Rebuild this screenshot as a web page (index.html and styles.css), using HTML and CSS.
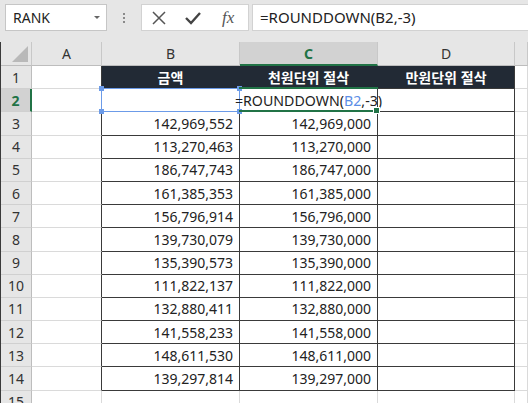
FILE: index.html
```html
<!DOCTYPE html>
<html lang="ko">
<head>
    <meta charset="UTF-8">
    <title>ROUNDDOWN</title>
    <link rel="stylesheet" href="styles.css">
</head>
<body>
    <div class="formula-bar">
        <div class="name-box">
            <span>RANK</span>
            <span class="dropdown"></span>
        </div>
        <div class="grip"><i></i><i></i><i></i></div>
        <div class="fx-box">
            <svg class="icon" width="16" height="16" viewBox="0 0 16 16">
                <path d="M2 2 L14 14 M14 2 L2 14" stroke="#555" stroke-width="1.5" fill="none"/>
            </svg>
            <svg class="icon" width="18" height="16" viewBox="0 0 18 16">
                <path d="M2 8 L7 13 L16 3" stroke="#444" stroke-width="2.4" fill="none"/>
            </svg>
            <span class="fx">fx</span>
        </div>
        <div class="formula-input">=ROUNDDOWN(B2,-3)</div>
    </div>

    <div class="sheet">
        <div class="corner"></div>
        <div class="col-head">A</div>
        <div class="col-head">B</div>
        <div class="col-head active">C</div>
        <div class="col-head">D</div>
        <div class="col-head"></div>

        <div class="row-head">1</div>
        <div class="cell edge"></div>
        <div class="cell title">금액</div>
        <div class="cell title">천원단위 절삭</div>
        <div class="cell title last">만원단위 절삭</div>
        <div class="cell"></div>

        <div class="row-head active">2</div>
        <div class="cell edge"></div>
        <div class="cell box ref"></div>
        <div class="cell box editing"><span class="edit-text">=ROUNDDOWN(<span class="ref-text">B2</span>,-3)</span></div>
        <div class="cell box last"></div>
        <div class="cell"></div>

        <div class="row-head">3</div>
        <div class="cell edge"></div>
        <div class="cell box num">142,969,552</div>
        <div class="cell box num">142,969,000</div>
        <div class="cell box last"></div>
        <div class="cell"></div>

        <div class="row-head">4</div>
        <div class="cell edge"></div>
        <div class="cell box num">113,270,463</div>
        <div class="cell box num">113,270,000</div>
        <div class="cell box last"></div>
        <div class="cell"></div>

        <div class="row-head">5</div>
        <div class="cell edge"></div>
        <div class="cell box num">186,747,743</div>
        <div class="cell box num">186,747,000</div>
        <div class="cell box last"></div>
        <div class="cell"></div>

        <div class="row-head">6</div>
        <div class="cell edge"></div>
        <div class="cell box num">161,385,353</div>
        <div class="cell box num">161,385,000</div>
        <div class="cell box last"></div>
        <div class="cell"></div>

        <div class="row-head">7</div>
        <div class="cell edge"></div>
        <div class="cell box num">156,796,914</div>
        <div class="cell box num">156,796,000</div>
        <div class="cell box last"></div>
        <div class="cell"></div>

        <div class="row-head">8</div>
        <div class="cell edge"></div>
        <div class="cell box num">139,730,079</div>
        <div class="cell box num">139,730,000</div>
        <div class="cell box last"></div>
        <div class="cell"></div>

        <div class="row-head">9</div>
        <div class="cell edge"></div>
        <div class="cell box num">135,390,573</div>
        <div class="cell box num">135,390,000</div>
        <div class="cell box last"></div>
        <div class="cell"></div>

        <div class="row-head">10</div>
        <div class="cell edge"></div>
        <div class="cell box num">111,822,137</div>
        <div class="cell box num">111,822,000</div>
        <div class="cell box last"></div>
        <div class="cell"></div>

        <div class="row-head">11</div>
        <div class="cell edge"></div>
        <div class="cell box num">132,880,411</div>
        <div class="cell box num">132,880,000</div>
        <div class="cell box last"></div>
        <div class="cell"></div>

        <div class="row-head">12</div>
        <div class="cell edge"></div>
        <div class="cell box num">141,558,233</div>
        <div class="cell box num">141,558,000</div>
        <div class="cell box last"></div>
        <div class="cell"></div>

        <div class="row-head">13</div>
        <div class="cell edge"></div>
        <div class="cell box num">148,611,530</div>
        <div class="cell box num">148,611,000</div>
        <div class="cell box last"></div>
        <div class="cell"></div>

        <div class="row-head">14</div>
        <div class="cell edge"></div>
        <div class="cell box num">139,297,814</div>
        <div class="cell box num">139,297,000</div>
        <div class="cell box last"></div>
        <div class="cell"></div>

        <div class="row-head">15</div>
        <div class="cell"></div>
        <div class="cell top"></div>
        <div class="cell top"></div>
        <div class="cell top"></div>
        <div class="cell"></div>
    </div>
</body>
</html>
```

FILE: styles.css
```css
* {
    box-sizing: border-box;
}
body {
    margin: 0;
    font-family: "Noto Sans", "Noto Sans CJK KR", sans-serif;
    font-size: 14px;
    color: #222;
    background-color: #e6e6e6;
    overflow: hidden;
}

/* formula bar */
.formula-bar {
    display: flex;
    align-items: center;
    height: 42px;
    padding: 0 0 7px 5px;
    gap: 3px;
}
.name-box {
    display: flex;
    align-items: center;
    justify-content: space-between;
    width: 102px;
    height: 27px;
    padding: 0 6px 0 7px;
    background-color: white;
    border: 1px solid #c6c6c6;
    font-size: 14px;
}
.dropdown {
    width: 0;
    height: 0;
    border-left: 3px solid transparent;
    border-right: 3px solid transparent;
    border-top: 3px solid #666;
}
.grip {
    display: flex;
    flex-direction: column;
    gap: 2px;
    width: 28px;
    align-items: center;
}
.grip i {
    width: 2px;
    height: 2px;
    background-color: #8a8a8a;
}
.fx-box {
    display: flex;
    align-items: center;
    width: 108px;
    height: 27px;
    padding-left: 9px;
    gap: 17px;
    background-color: white;
    border: 1px solid #d2d2d2;
}
.fx {
    font-family: "Liberation Serif", serif;
    font-style: italic;
    font-size: 17px;
    color: #555;
    margin-left: 3px;
}
.formula-input {
    flex: 1;
    height: 27px;
    padding-left: 7px;
    line-height: 25px;
    background-color: white;
    border: 1px solid #d2d2d2;
    border-right: none;
    font-size: 15px;
}

/* sheet grid */
.sheet {
    display: grid;
    grid-template-columns: 31px 70px 138px 138px 137px 1fr;
    grid-template-rows: 24px;
    grid-auto-rows: 23.2px;
    background-color: white;
    border-left: 1px solid #3a3a3a;
}
.corner {
    position: relative;
    background-color: #e6e6e6;
    border-right: 1px solid #c8c8c8;
    border-bottom: 1px solid #bdbdbd;
}
.corner::after {
    content: "";
    position: absolute;
    right: 3px;
    bottom: 3px;
    border-left: 16px solid transparent;
    border-bottom: 16px solid #b9b9b9;
}
.col-head {
    display: flex;
    align-items: center;
    justify-content: center;
    background-color: #e6e6e6;
    border-right: 1px solid #c8c8c8;
    border-bottom: 1px solid #bdbdbd;
    color: #333;
    font-size: 14px;
}
.col-head.active {
    background-color: #d2d2d2;
    color: #217346;
    font-weight: bold;
    border-bottom: 2px solid #217346;
}
.row-head {
    display: flex;
    align-items: center;
    justify-content: center;
    background-color: #e6e6e6;
    border-right: 1px solid #bdbdbd;
    border-bottom: 1px solid #d0d0d0;
    color: #333;
    font-size: 14px;
}
.row-head.active {
    background-color: #d2d2d2;
    color: #217346;
    font-weight: bold;
    border-right: 2px solid #217346;
}
.cell {
    position: relative;
    display: flex;
    align-items: center;
    border-right: 1px solid #dadada;
    border-bottom: 1px solid #dadada;
}
.cell.edge {
    border-right-color: #3a3a3a;
}
.cell.box {
    border-right-color: #3a3a3a;
    border-bottom-color: #3a3a3a;
}
.cell.top {
    border-right-color: #dadada;
}
.title {
    justify-content: center;
    background-color: #222a35;
    color: white;
    font-family: "Noto Sans CJK KR", sans-serif;
    font-weight: bold;
    font-size: 14px;
    border-right-color: #222a35;
    border-bottom-color: #3a3a3a;
}
.title.last {
    border-right-color: #3a3a3a;
}
.num {
    justify-content: flex-end;
    padding-right: 6px;
}

/* active cell and referenced cell */
.editing {
    justify-content: center;
    overflow: visible;
    z-index: 2;
}
.edit-text {
    white-space: nowrap;
    font-size: 14.2px;
}
.ref-text {
    color: #5b8ee6;
}
.editing::before {
    content: "";
    position: absolute;
    left: -1px;
    top: -2px;
    right: -1px;
    bottom: -1px;
    border-top: 2px solid #217346;
    border-bottom: 2px solid #217346;
}
.editing::after {
    content: "";
    position: absolute;
    right: -3px;
    bottom: -3px;
    width: 5px;
    height: 5px;
    background-color: #217346;
    border: 1px solid white;
}
.ref {
    z-index: 1;
}
.ref::before {
    content: "";
    position: absolute;
    left: -1px;
    top: -1px;
    right: -1px;
    bottom: -1px;
    border: 1px solid #6c9be8;
}
.ref::after {
    content: "";
    position: absolute;
    left: -3px;
    top: -3px;
    right: -3px;
    bottom: -3px;
    background:
        linear-gradient(#6c9be8, #6c9be8) left top / 5px 5px no-repeat,
        linear-gradient(#6c9be8, #6c9be8) right top / 5px 5px no-repeat,
        linear-gradient(#6c9be8, #6c9be8) left bottom / 5px 5px no-repeat,
        linear-gradient(#6c9be8, #6c9be8) right bottom / 5px 5px no-repeat;
}
```
